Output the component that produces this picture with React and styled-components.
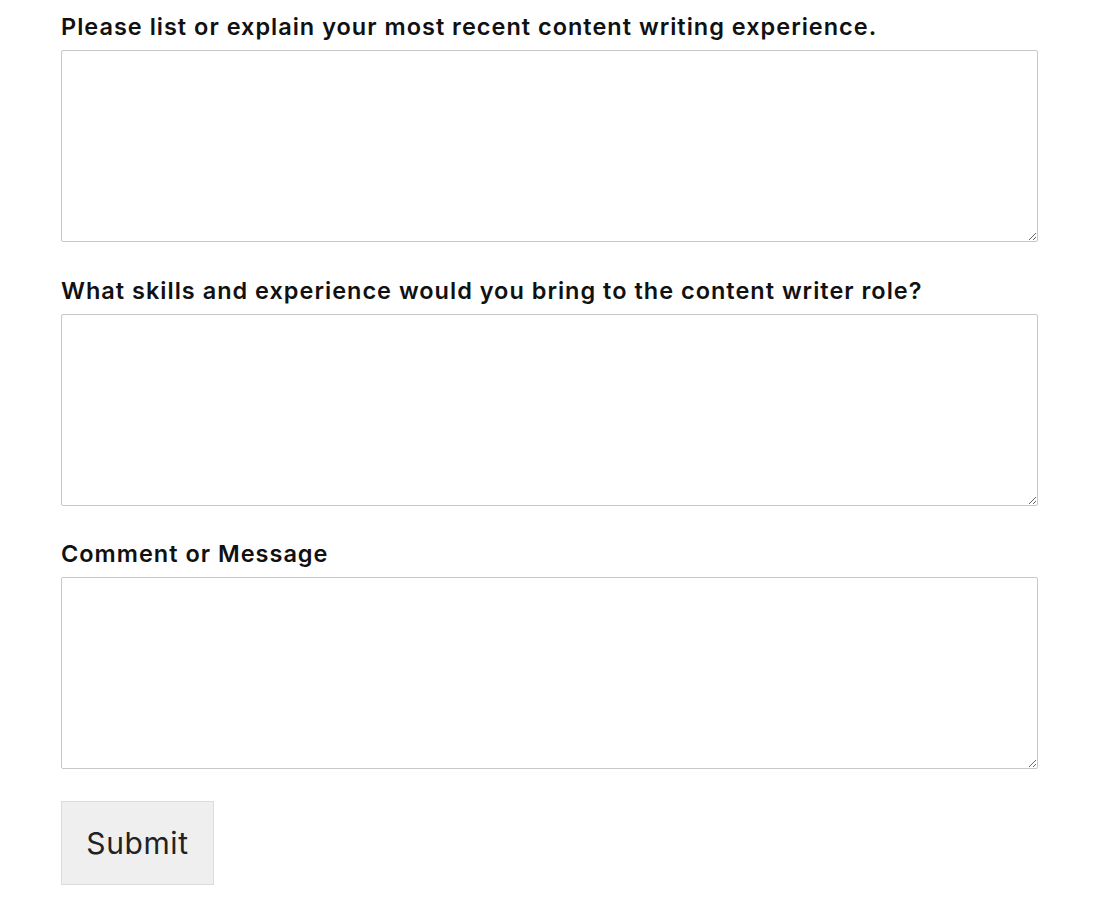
import React from 'react'
import styled, { createGlobalStyle } from 'styled-components'

const Global = createGlobalStyle`
  body {
    margin: 0;
    background: #fff;
    font-family: Inter, "Liberation Sans", Arial, sans-serif;
  }
`;

const Form = styled.form`
  padding: 12px 0 0 61px;
  width: 977px;
`;

const Field = styled.div`
  margin-bottom: 33.5px;

  &:last-of-type {
    margin-bottom: 32px;
  }
`;

const Label = styled.label`
  display: block;
  font-size: 23.5px;
  line-height: 30px;
  font-weight: 600;
  letter-spacing: 1px;
  color: #111;
  margin-bottom: 8px;
`;

const Area = styled.textarea`
  display: block;
  box-sizing: border-box;
  width: 100%;
  height: 192px;
  border: 1px solid #c8c8c8;
  border-radius: 2px;
  background: #fff;
  margin: 0;
  resize: vertical;
`;

const Submit = styled.button`
  box-sizing: border-box;
  width: 153px;
  height: 84px;
  background: #efefef;
  border: 1px solid #dcdcdc;
  border-radius: 0;
  font-family: Inter, "Liberation Sans", Arial, sans-serif;
  font-size: 30px;
  letter-spacing: 0.6px;
  color: #222;
  cursor: pointer;
`;

const questions = [
  { id: 'recent', text: 'Please list or explain your most recent content writing experience.' },
  { id: 'skills', text: 'What skills and experience would you bring to the content writer role?' },
  { id: 'comment', text: 'Comment or Message' },
];

export default function App() {
  return (
    <>
      <Global />
      <Form onSubmit={(e) => e.preventDefault()}>
        {questions.map((q) => (
          <Field key={q.id}>
            <Label htmlFor={q.id}>{q.text}</Label>
            <Area id={q.id} />
          </Field>
        ))}
        <Submit type="submit">Submit</Submit>
      </Form>
    </>
  );
}
